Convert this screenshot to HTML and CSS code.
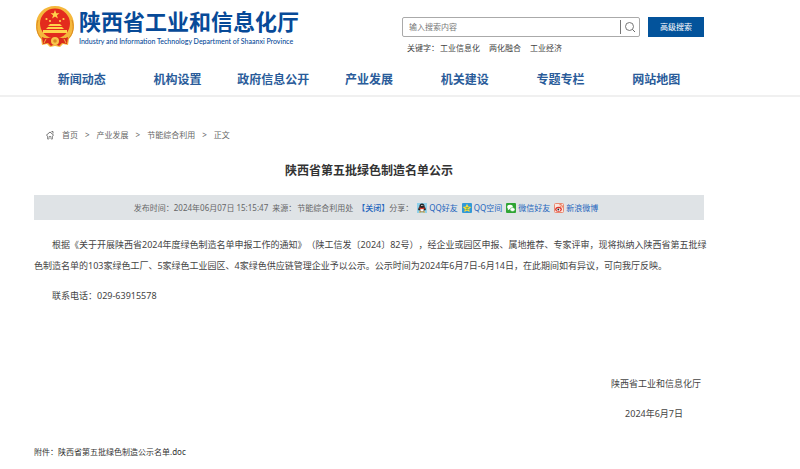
FILE: index.html
```html
<!DOCTYPE html>
<html lang="zh-CN">
<head>
<meta charset="utf-8">
<meta name="viewport" content="width=device-width, initial-scale=1">
<title>陕西省第五批绿色制造名单公示</title>
<link rel="stylesheet" href="styles.css">
</head>
<body>
<header class="site-header">
  <div class="wrap masthead">
    <a class="brand" href="#">
      <svg class="emblem" viewBox="0 0 40 42" aria-hidden="true">
        <path d="M20 0C9 0 1 8 1 19c0 6 2 11 5 14l1 6 5-1 3 3 5-1 5 1 3-3 5 1 1-6c3-3 5-8 5-14C39 8 31 0 20 0z" fill="#f5b83c"/>
        <path d="M3 14C0 23 3 31 9 34M37 14c3 9 0 17-6 20" fill="none" stroke="#dc8a20" stroke-width="1"/>
        <circle cx="20" cy="17.500" r="15" fill="#e32b1d"/>
        <path d="M20 4l1.200 3.200h3.300l-2.600 2 1 3.200-2.900-2-2.900 2 1-3.200-2.600-2h3.300z" fill="#ffd34b"/>
        <g fill="#ffd34b"><circle cx="11.500" cy="13" r="1.100"/><circle cx="15" cy="15" r="1.100"/><circle cx="25" cy="15" r="1.100"/><circle cx="28.500" cy="13" r="1.100"/>
        <path d="M13 20l2-2h10l2 2zM11 23l2-2h14l2 2zM8 24h24v3H8z"/></g>
        <path d="M7 31c4 2 8 1 10 0l3 2 3-2c2 1 6 2 10 0l-1 7-5-1-3 3-4-2-4 2-3-3-5 1z" fill="#d92a1c"/>
        <circle cx="20" cy="35" r="4" fill="#f8c64a"/><circle cx="20" cy="35" r="1.800" fill="#d98a22"/>
        <path d="M11 33l-2 4M29 33l2 4" stroke="#f5b83c"/>
      </svg>
      <span class="brand-text">
        <span class="brand-name">陕西省工业和信息化厅</span>
        <span class="brand-en">Industry and Information Technology Department of Shaanxi Province</span>
      </span>
    </a>
    <form class="search">
      <div class="search-row">
        <div class="search-box">
          <input type="text" placeholder="输入搜索内容" aria-label="输入搜索内容">
          <button class="search-go" type="button" aria-label="搜索">
            <svg viewBox="0 0 12 12" aria-hidden="true"><circle cx="5.500" cy="5.500" r="4" fill="none" stroke="#666" stroke-width="0.900"/><path d="M8.500 8.500l2.500 2.500" stroke="#666"/></svg>
          </button>
        </div>
        <button class="advanced" type="button">高级搜索</button>
      </div>
      <div class="keywords"><span>关键字：</span><a href="#">工业信息化</a><a href="#">两化融合</a><a href="#">工业经济</a></div>
    </form>
  </div>
  <nav class="wrap nav">
    <a href="#">新闻动态</a><a href="#">机构设置</a><a href="#">政府信息公开</a><a href="#">产业发展</a><a href="#">机关建设</a><a href="#">专题专栏</a><a href="#">网站地图</a>
  </nav>
</header>
<main class="wrap">
  <div class="crumbs">
    <svg viewBox="0 0 10 10" aria-hidden="true"><path d="M1 5.500L5 2l4 3.500M6.500 1.500h1.500v2" fill="none" stroke="#777"/><path d="M2.500 5.500V9h1.500V6.500h2V9h1.500V5.500" fill="none" stroke="#888" stroke-width="0.900"/></svg>
    <a href="#">首页</a><span>&gt;</span><a href="#">产业发展</a><span>&gt;</span><a href="#">节能综合利用</a><span>&gt;</span><span>正文</span>
  </div>
  <h1>陕西省第五批绿色制造名单公示</h1>
  <div class="meta">
    <span>发布时间：2024年06月07日 15:15:47</span>
    <span class="source">来源：</span>
    <span>节能综合利用处</span>
    <a class="close" href="#">【关闭】</a>
    <span class="share-label">分享：</span>
    <a class="share" href="#"><svg viewBox="0 0 10 10" aria-hidden="true"><path fill="#8fd0ea" d="M0 0h10v10H0z"/><path d="M5 .5c-2 0-2.600 1.500-2.600 3C1.500 5 1 6 1.200 7.200L2.400 7c.5 1.500 1.500 2 2.600 2s2.100-.5 2.600-2l1.200.2C9 6 8.500 5 7.600 3.500 7.600 2 7 .5 5 .5z" fill="#252525"/><ellipse cx="5" cy="7" rx="1.800" ry="1.700" fill="#fff"/><path d="M2.300 4.200c2 1 3.400 1 5.400 0v1.300c-2 1-3.400 1-5.400 0z" fill="#e43a2b"/><path d="M4 2.500h.7M5.500 2.500h.7" stroke="#fff"/><path d="M2 9h2.500M5.500 9H8" stroke="#f4a51c"/></svg>QQ好友</a>
    <a class="share" href="#"><svg viewBox="0 0 10 10" aria-hidden="true"><rect width="10" height="10" rx="1" fill="#3299d8"/><path d="M5 .7l1.300 2.800 3 .4-2.200 2 .6 3L5 7.500 2.300 8.900l.6-3-2.200-2 3-.4z" fill="#ffdc35"/><path d="M3.500 4.500h3L3.700 6.500h3" fill="none" stroke="#3a9b64" stroke-width="0.600"/></svg>QQ空间</a>
    <a class="share" href="#"><svg viewBox="0 0 10 10" aria-hidden="true"><rect width="10" height="10" rx="1" fill="#2fa534"/><ellipse cx="4" cy="4" rx="2.800" ry="2.200" fill="#fff"/><path d="M2 5.500L1.800 7.200 4 6z" fill="#fff"/><ellipse cx="6.500" cy="6.500" rx="2.500" ry="1.900" fill="#fff" stroke="#2fa534" stroke-width="0.500"/></svg>微信好友</a>
    <a class="share" href="#"><svg viewBox="0 0 10 10" aria-hidden="true"><rect x=".5" y=".5" width="9" height="9" rx="1" fill="#fbe4dc" stroke="#e98b72"/><ellipse cx="4.500" cy="6.200" rx="3.300" ry="2.500" fill="#dd3329"/><ellipse cx="4.500" cy="6.500" rx="2" ry="1.500" fill="#fff"/><circle cx="4.300" cy="6.500" r=".9" fill="#222"/><path d="M5.500 1.500c2-.3 3.200 1 2.900 3M5.700 3c1-.1 1.400.5 1.300 1.400" fill="none" stroke="#e9552b" stroke-width="0.800"/></svg>新浪微博</a>
  </div>
  <article>
    <p>根据《关于开展陕西省2024年度绿色制造名单申报工作的通知》（陕工信发〔2024〕82号），经企业或园区申报、属地推荐、专家评审，现将拟纳入陕西省第五批绿色制造名单的103家绿色工厂、5家绿色工业园区、4家绿色供应链管理企业予以公示。公示时间为2024年6月7日-6月14日，在此期间如有异议，可向我厅反映。</p>
    <p>联系电话：029-63915578</p>
    <div class="signature"><span>陕西省工业和信息化厅</span><time datetime="2024-06-07">2024年6月7日</time></div>
  </article>
  <div class="attachment">附件：<a href="#">陕西省第五批绿色制造公示名单.doc</a></div>
</main>
</body>
</html>
```
FILE: styles.css
```css
* { box-sizing: border-box; }
body {
  margin: 0;
  background: #fff;
  color: #444;
  font: 8px/12px "Noto Sans", "Noto Sans CJK SC", sans-serif;
  text-spacing-trim: space-all;
}
a { color: inherit; text-decoration: none; }
button, input { font: inherit; margin: 0; }
.wrap { margin: 0 12% 0 34px; }
.site-header { border-bottom: 2px solid #f0f0f0; }
.masthead {
  display: flex;
  justify-content: space-between;
  align-items: flex-start;
  height: 65px;
}
.brand { display: flex; padding-top: 6px; gap: 3px; color: #074a98; }
.emblem { width: 42px; height: 42px; }
.brand-text { display: flex; flex-direction: column; }
.brand-name { font-size: 22px; line-height: 30px; font-weight: 700; white-space: nowrap; }
.brand-en { font-family: Lato, "Noto Sans", sans-serif; font-size: 7px; line-height: 10px; white-space: nowrap; font-weight: 500; }
.search { width: 302px; padding-top: 17px; }
.search-row { display: flex; gap: 8px; }
.search-box {
  display: flex;
  flex: 1;
  align-items: center;
  height: 20px;
  border: 1px solid #aaa;
  border-radius: 2px;
}
.search-box input {
  flex: 1;
  min-width: 0;
  border: 0;
  padding: 0 6px;
  outline: 0;
  background: none;
}
.search-box input::placeholder { color: #777; opacity: 1; }
.search-go {
  display: flex;
  border: 0;
  border-left: 1px solid #777;
  background: none;
  padding: 1px 3px;
}
.search-go svg { width: 12px; height: 12px; }
.advanced { width: 56px; height: 20px; padding: 0; border: 0; background: #03539b; color: #fff; }
.keywords { display: flex; gap: 9px; padding: 5px 5px 0; }
.keywords span { margin-right: -8px; }
.nav {
  display: grid;
  grid-template-columns: repeat(7, 1fr);
  text-align: center;
  color: #2a5c9a;
  font-size: 12px;
  font-weight: 700;
  line-height: 30px;
  white-space: nowrap;
}
.crumbs {
  display: flex;
  align-items: center;
  gap: 7px;
  padding: 32px 11px 0;
  color: #666;
}
.crumbs svg { width: 10px; height: 10px; }
h1 {
  margin: 21px 0 15px;
  color: #333;
  font-size: 12px;
  line-height: 18px;
  text-align: center;
}
.meta {
  display: flex;
  justify-content: center;
  align-items: center;
  gap: 4px;
  height: 25px;
  padding-right: 6px;
  background: #dfe3e6;
  color: #666;
  white-space: nowrap;
}
.meta a { color: #2465bd; }
.meta .source { margin-right: -3px; }
.close { font-weight: 500; }
.share-label { margin-left: -4px; }
.share { display: flex; align-items: center; gap: 2px; }
.share svg { width: 10px; height: 10px; }
article { padding-top: 14px; font-size: 9px; line-height: 21px; }
article p { margin: 0 -6px 9px 0; text-indent: 18px; }
.signature {
  display: flex;
  flex-direction: column;
  align-items: flex-end;
  gap: 9px;
  margin: 67px 3px 0 0;
}
.signature time { padding-right: 2em; }
.attachment { margin-top: 22px; color: #333; }
```
